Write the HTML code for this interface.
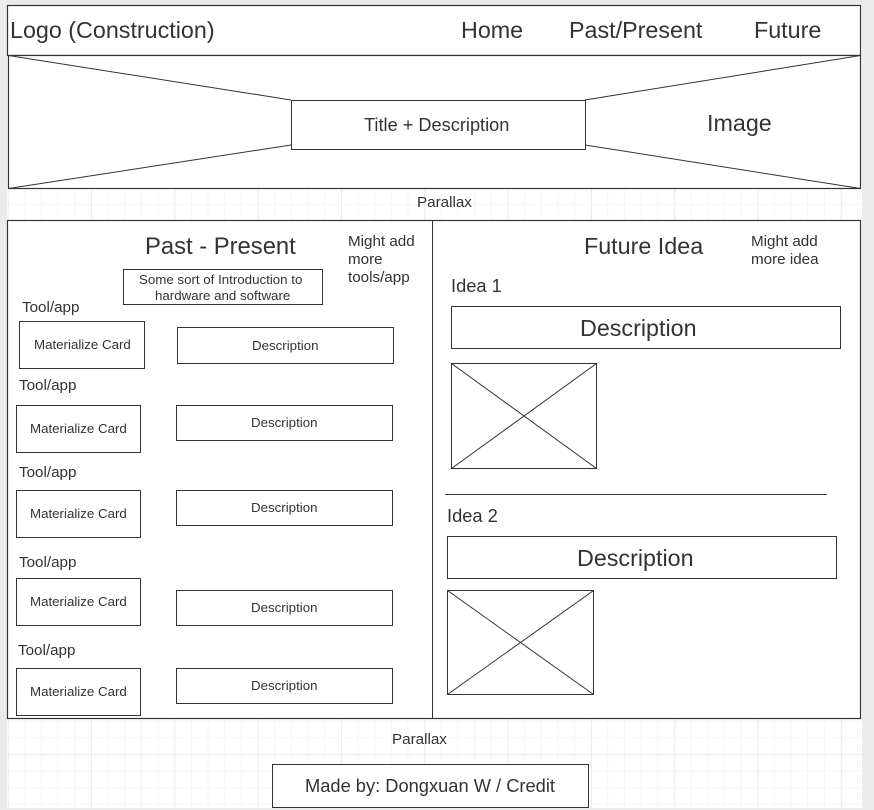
<!DOCTYPE html>
<html><head><meta charset="utf-8"><style>
html,body{margin:0;padding:0;width:874px;height:810px;overflow:hidden;background:#ebebeb;}
#c{position:absolute;left:7px;top:5px;width:855px;height:803px;background-color:#fff;
background-image:linear-gradient(#ececec 1px,transparent 1px),linear-gradient(90deg,#ececec 1px,transparent 1px),linear-gradient(#f6f6f6 1px,transparent 1px),linear-gradient(90deg,#f6f6f6 1px,transparent 1px);
background-size:83.33px 83.33px,83.33px 83.33px,16.67px 16.67px,16.67px 16.67px;
background-position:0.7px -0.7px,0.7px -0.7px,0.7px -0.7px,0.7px -0.7px;}
svg{position:absolute;left:0;top:0;}
text{font-family:"Liberation Sans",sans-serif;fill:#333;}
</style></head><body>
<div id="c"></div>
<svg width="874" height="810" viewBox="0 0 874 810">
<g fill="#fff" stroke="#333" stroke-width="1.2">
<rect x="7.5" y="5.5" width="853" height="50"/>
<rect x="8.5" y="55.5" width="852" height="133"/>
<rect x="7.5" y="220.5" width="853" height="498"/>
</g>
<g stroke="#333" stroke-width="1" fill="none">
<line x1="8.5" y1="55.5" x2="291" y2="100"/>
<line x1="8.5" y1="188.5" x2="291" y2="145"/>
<line x1="860.5" y1="55.5" x2="585" y2="100"/>
<line x1="860.5" y1="188.5" x2="585" y2="145"/>
<line x1="432.5" y1="220.5" x2="432.5" y2="718.5"/>
<line x1="445" y1="494.5" x2="827" y2="494.5"/>
<rect x="291.5" y="100.5" width="294" height="49" fill="#fff"/>
<rect x="123.5" y="269.5" width="199" height="35"/>
<rect x="19.5" y="321.5" width="125" height="47"/>
<rect x="177.5" y="327.5" width="216" height="36"/>
<rect x="16.5" y="405.5" width="124" height="47"/>
<rect x="176.5" y="405.5" width="216" height="35"/>
<rect x="16.5" y="490.5" width="124" height="47"/>
<rect x="176.5" y="490.5" width="216" height="35"/>
<rect x="16.5" y="578.5" width="124" height="47"/>
<rect x="176.5" y="590.5" width="216" height="35"/>
<rect x="16.5" y="668.5" width="124" height="47"/>
<rect x="176.5" y="668.5" width="216" height="35"/>
<rect x="451.5" y="306.5" width="389" height="42"/>
<rect x="451.5" y="363.5" width="145" height="105"/>
<line x1="451.5" y1="363.5" x2="596.5" y2="468.5"/>
<line x1="596.5" y1="363.5" x2="451.5" y2="468.5"/>
<rect x="447.5" y="536.5" width="389" height="42"/>
<rect x="447.5" y="590.5" width="146" height="104"/>
<line x1="447.5" y1="590.5" x2="593.5" y2="694.5"/>
<line x1="593.5" y1="590.5" x2="447.5" y2="694.5"/>
<rect x="272.5" y="764.5" width="316" height="43" fill="#fff"/>
</g>
<g font-size="23.3">
<text x="10" y="38">Logo (Construction)</text>
<text x="461" y="38">Home</text>
<text x="569" y="38">Past/Present</text>
<text x="754" y="38">Future</text>
<text x="707" y="131">Image</text>
<text x="580" y="336">Description</text>
<text x="577" y="566">Description</text>
<text x="145" y="254" font-size="23.8">Past - Present</text>
<text x="584" y="254">Future Idea</text>
</g>
<text x="364" y="131" font-size="18.2">Title + Description</text>
<g font-size="15.2">
<text x="417" y="207">Parallax</text>
<text x="392" y="744">Parallax</text>
<text x="348" y="246">Might add</text>
<text x="348" y="264">more</text>
<text x="348" y="282">tools/app</text>
<text x="751" y="246">Might add</text>
<text x="751" y="264">more idea</text>
<text x="22" y="312">Tool/app</text>
<text x="19" y="390">Tool/app</text>
<text x="19" y="477">Tool/app</text>
<text x="19" y="567">Tool/app</text>
<text x="18" y="655">Tool/app</text>
</g>
<g font-size="18.3"><text x="451" y="292">Idea 1</text><text x="447" y="522">Idea 2</text>
<text x="305" y="792">Made by: Dongxuan W / Credit</text></g>
<g font-size="13.3">
<text x="34" y="349">Materialize Card</text>
<text x="30" y="433">Materialize Card</text>
<text x="30" y="518">Materialize Card</text>
<text x="30" y="606">Materialize Card</text>
<text x="30" y="696">Materialize Card</text>
<text x="252" y="350">Description</text>
<text x="251" y="427">Description</text>
<text x="251" y="512">Description</text>
<text x="251" y="612">Description</text>
<text x="251" y="690">Description</text>
<text x="139" y="284">Some sort of Introduction to</text>
<text x="155" y="300">hardware and software</text>
</g>
</svg>
</body></html>
